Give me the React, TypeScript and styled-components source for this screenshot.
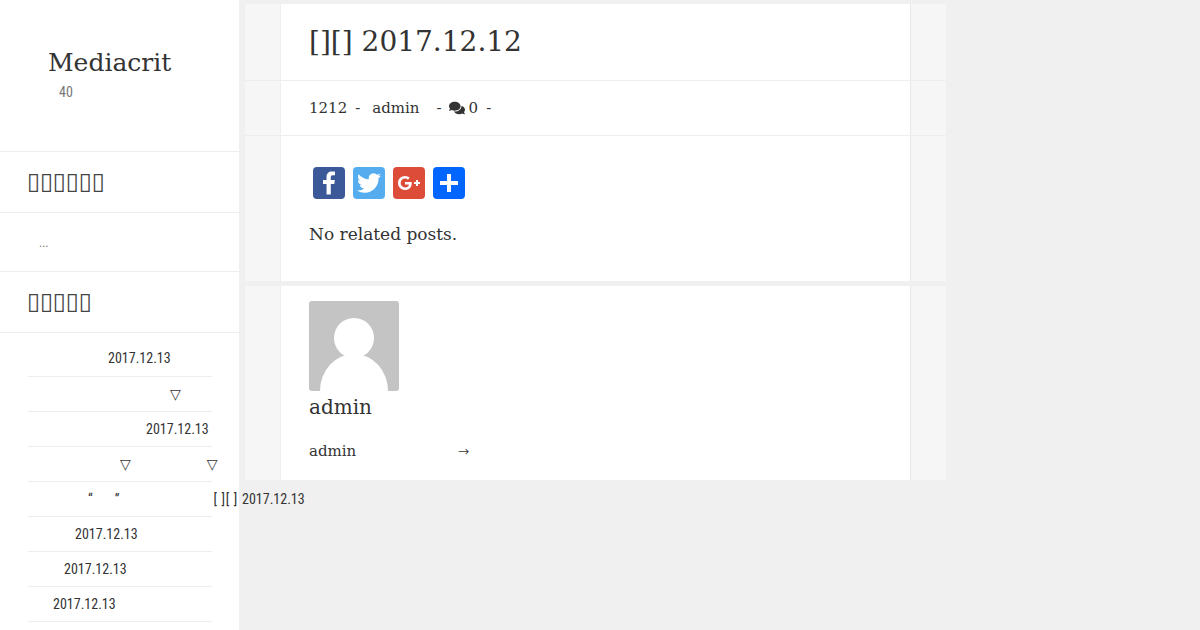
import React from "react";
import styled, { createGlobalStyle } from "styled-components";
import { FaComments } from "react-icons/fa";

const GlobalStyle = createGlobalStyle`
  html, body {
    margin: 0;
    padding: 0;
    height: 630px;
    overflow: hidden;
    background: #f0f0f0;
    color: #333;
    font-family: "DejaVu Serif", serif;
  }
  * {
    box-sizing: border-box;
  }
`;

const narrow = `"Liberation Sans Narrow", "Roboto Condensed", Roboto, sans-serif`;

const Page = styled.div`
  display: flex;
  align-items: flex-start;
  height: 630px;
`;

const Sidebar = styled.aside`
  width: 239px;
  height: 630px;
  flex: none;
  background: #fff;
  position: relative;
  z-index: 1;
`;

const Brand = styled.div`
  height: 152px;
  padding: 47px 0 0 48px;
  border-bottom: 1px solid #eee;
`;

const SiteName = styled.div`
  font-size: 25px;
  line-height: 31px;
`;

const Tagline = styled.div`
  margin: 6px 0 0 11px;
  font-family: ${narrow};
  font-size: 14px;
  line-height: 17px;
  color: #777;
`;

const WidgetTitle = styled.h3`
  margin: 0;
  height: 61px;
  padding-left: 27px;
  font-size: 23.5px;
  font-weight: 400;
  line-height: 58px;
  color: #444;
  border-bottom: 1px solid #eee;
`;

const Excerpt = styled.div`
  height: 59px;
  padding: 22px 0 0 39px;
  font-family: ${narrow};
  font-size: 12px;
  line-height: 17px;
  color: #777;
  border-bottom: 1px solid #eee;
`;

const PostList = styled.ul`
  list-style: none;
  margin: 0 27px 0 28px;
  padding: 9px 0 0;
`;

const PostRow = styled.li<{ $indent: number }>`
  height: 35px;
  padding: 7px 0 0 ${({ $indent }) => $indent}px;
  font-family: ${narrow};
  font-size: 14px;
  line-height: 20px;
  white-space: pre;
  color: #333;
  border-bottom: 1px solid #eee;

  &:first-child {
    padding-top: 6px;
  }
`;

const Gap = styled.span<{ $width: number }>`
  display: inline-block;
  width: ${({ $width }) => $width}px;
`;

const Triangle = styled.span`
  font-family: "DejaVu Sans", sans-serif;
  font-size: 14px;
`;

const Brackets = styled.span`
  letter-spacing: 0.7px;
`;

const Article = styled.main`
  width: 701px;
  margin: 4px 0 0 6px;
`;

const Band = styled.section<{ $gap?: number; $line?: boolean }>`
  padding: 0 35px 0 36px;
  margin-bottom: ${({ $gap }) => $gap ?? 0}px;
  background: #f6f6f6;
  border-bottom: ${({ $line }) => ($line ? "1px solid #eee" : "0")};
`;

const Cell = styled.div<{ $height: number }>`
  height: ${({ $height }) => $height}px;
  padding: 0 28px;
  background: #fff;
  border-right: 1px solid #e9e9e9;
  box-shadow: -1px 0 0 #eee;
`;

const Title = styled.h1`
  margin: 0;
  padding-top: 20px;
  font-size: 28px;
  font-weight: 400;
  line-height: 36px;
`;

const Meta = styled.div`
  display: flex;
  align-items: center;
  height: 54px;
  font-size: 15px;
  white-space: pre;
`;

const Dash = styled.span<{ $left: number }>`
  margin-left: ${({ $left }) => $left}px;
`;

const CommentIcon = styled(FaComments)`
  width: 16px;
  height: 16px;
  margin-left: 7px;
`;

const ShareRow = styled.div`
  display: flex;
  gap: 8px;
  padding: 31px 0 0 4px;
`;

const ShareLink = styled.a<{ $color: string }>`
  display: block;
  width: 32px;
  height: 32px;
  border-radius: 4px;
  background: ${({ $color }) => $color};

  svg {
    display: block;
    width: 32px;
    height: 32px;
    fill: #fff;
  }
`;

const Related = styled.p`
  margin: 24px 0 0;
  font-size: 17px;
  line-height: 23px;
`;

const AvatarBox = styled.svg`
  display: block;
  width: 90px;
  height: 90px;
  border-radius: 3px;
`;

const BioTop = styled.div`
  padding-top: 15px;
`;

const AuthorName = styled.div`
  margin-top: 4px;
  font-size: 20px;
  line-height: 25px;
`;

const AuthorLink = styled.div`
  display: flex;
  align-items: center;
  margin-top: 21px;
  font-size: 15px;
  line-height: 20px;
`;

const Arrow = styled.span`
  margin-left: 102px;
  font-family: "Noto Sans CJK SC", sans-serif;
  font-size: 11px;
`;

const shares = [
  {
    color: "#3b5998",
    d: "M17.78 27.5V17.008h3.522l.527-4.09h-4.05v-2.61c0-1.182.33-1.99 2.023-1.99h2.166V4.66c-.375-.05-1.66-.16-3.155-.16-3.123 0-5.26 1.905-5.26 5.405v3.016h-3.53v4.09h3.53V27.5h4.223z",
  },
  {
    color: "#55acee",
    d: "M28 8.557a9.913 9.913 0 0 1-2.828.775 4.93 4.93 0 0 0 2.166-2.725 9.738 9.738 0 0 1-3.13 1.194 4.92 4.92 0 0 0-3.593-1.55 4.924 4.924 0 0 0-4.794 6.049c-4.09-.21-7.72-2.17-10.15-5.15a4.942 4.942 0 0 0-.665 2.477c0 1.71.87 3.214 2.19 4.1a4.968 4.968 0 0 1-2.23-.616v.06c0 2.39 1.7 4.38 3.952 4.83-.414.115-.85.174-1.297.174-.318 0-.626-.03-.928-.086a4.935 4.935 0 0 0 4.6 3.42 9.893 9.893 0 0 1-6.114 2.107c-.398 0-.79-.023-1.175-.068a13.953 13.953 0 0 0 7.55 2.213c9.056 0 14.01-7.507 14.01-14.013 0-.213-.005-.426-.015-.637.96-.695 1.795-1.56 2.455-2.55z",
  },
  {
    color: "#dd4b39",
    d: "M27 15h-2v-2h-2v2h-2v2h2v2h2v-2h2m-15-2v2.4h3.97c-.16 1.03-1.2 3.02-3.97 3.02-2.39 0-4.34-1.98-4.34-4.42s1.95-4.42 4.34-4.42c1.36 0 2.27.58 2.79 1.08l1.9-1.83C15.47 9.69 13.89 9 12 9c-3.87 0-7 3.13-7 7s3.13 7 7 7c4.04 0 6.72-2.84 6.72-6.84 0-.46-.05-.81-.11-1.16H12z",
  },
  {
    color: "#0166ff",
    d: "M14 7h4v18h-4zM7 14h18v4H7z",
  },
];

const App = () => {
  return (
    <Page>
      <GlobalStyle />
      <Sidebar>
        <Brand>
          <SiteName>Mediacrit</SiteName>
          <Tagline>40</Tagline>
        </Brand>
        <WidgetTitle>{"\u25AF\u25AF\u25AF\u25AF\u25AF\u25AF"}</WidgetTitle>
        <Excerpt>...</Excerpt>
        <WidgetTitle>{"\u25AF\u25AF\u25AF\u25AF\u25AF"}</WidgetTitle>
        <PostList>
          <PostRow $indent={80}>2017.12.13</PostRow>
          <PostRow $indent={142}>
            <Triangle>▽</Triangle>
          </PostRow>
          <PostRow $indent={118}>2017.12.13</PostRow>
          <PostRow $indent={92}>
            <Triangle>▽</Triangle>
            <Gap $width={76} />
            <Triangle>▽</Triangle>
          </PostRow>
          <PostRow $indent={60}>
            “<Gap $width={22} />”<Gap $width={94} />
            <Brackets>{"[ ][ ] "}</Brackets>2017.12.13
          </PostRow>
          <PostRow $indent={47}>2017.12.13</PostRow>
          <PostRow $indent={36}>2017.12.13</PostRow>
          <PostRow $indent={25}>2017.12.13</PostRow>
        </PostList>
      </Sidebar>
      <Article>
        <Band $line>
          <Cell $height={76}>
            <Title>[][] 2017.12.12</Title>
          </Cell>
        </Band>
        <Band $line>
          <Cell $height={54}>
            <Meta>
              1212
              <Dash $left={8}>-</Dash>
              <Dash $left={12}>admin</Dash>
              <Dash $left={17}>-</Dash>
              <CommentIcon />
              <Dash $left={4}>0</Dash>
              <Dash $left={8}>-</Dash>
            </Meta>
          </Cell>
        </Band>
        <Band $gap={5}>
          <Cell $height={145}>
            <ShareRow>
              {shares.map((share) => (
                <ShareLink key={share.color} $color={share.color}>
                  <svg viewBox="0 0 32 32">
                    <path d={share.d} />
                  </svg>
                </ShareLink>
              ))}
            </ShareRow>
            <Related>No related posts.</Related>
          </Cell>
        </Band>
        <Band>
          <Cell $height={194}>
            <BioTop>
              <AvatarBox viewBox="0 0 90 90">
                <rect width="90" height="90" fill="#c4c4c4" />
                <circle cx="45" cy="37" r="20" fill="#fff" />
                <ellipse cx="45" cy="90" rx="34" ry="37" fill="#fff" />
              </AvatarBox>
              <AuthorName>admin</AuthorName>
              <AuthorLink>
                admin
                <Arrow>→</Arrow>
              </AuthorLink>
            </BioTop>
          </Cell>
        </Band>
      </Article>
    </Page>
  );
};

export default App;
